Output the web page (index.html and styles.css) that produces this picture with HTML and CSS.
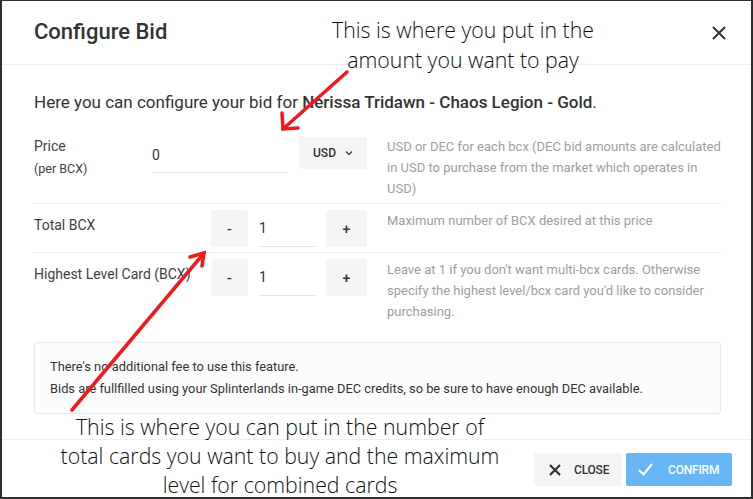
FILE: index.html
```html
<!DOCTYPE html>
<html>
<head>
<meta charset="utf-8">
<link rel="stylesheet" href="styles.css">
</head>
<body>
<div class="modal">
  <header class="modal-header">
    <h1 class="title">Configure Bid</h1>
    <button class="icon-close" aria-label="close">
      <svg width="16" height="16" viewBox="0 0 16 16"><path d="M2 2 L14 14 M14 2 L2 14" stroke="#333" stroke-width="2" fill="none"/></svg>
    </button>
  </header>
  <main class="modal-body">
    <p class="intro">Here you can configure your bid for <b>Nerissa Tridawn - Chaos Legion - Gold</b>.</p>
    <div class="row row-first">
      <div class="label label-price">Price<br><span class="sub">(per BCX)</span></div>
      <div class="controls">
        <div class="input wide">0</div>
        <div class="btn btn-usd">USD <svg width="8" height="6" viewBox="0 0 8 6"><path d="M1 1.5 L4 4.5 L7 1.5" stroke="#444" stroke-width="1.3" fill="none"/></svg></div>
      </div>
      <div class="desc">USD or DEC for each bcx (DEC bid amounts are calculated in USD to purchase from the market which operates in USD)</div>
    </div>
    <div class="row">
      <div class="label">Total BCX</div>
      <div class="controls">
        <div class="btn btn-step">-</div>
        <div class="input narrow">1</div>
        <div class="btn btn-step plus">+</div>
      </div>
      <div class="desc">Maximum number of BCX desired at this price</div>
    </div>
    <div class="row row-last">
      <div class="label">Highest Level Card (BCX)</div>
      <div class="controls">
        <div class="btn btn-step">-</div>
        <div class="input narrow">1</div>
        <div class="btn btn-step plus">+</div>
      </div>
      <div class="desc">Leave at 1 if you don't want multi-bcx cards. Otherwise specify the highest level/bcx card you'd like to consider purchasing.</div>
    </div>
    <div class="info">
      <p>There's no additional fee to use this feature.</p>
      <p>Bids are fullfilled using your Splinterlands in-game DEC credits, so be sure to have enough DEC available.</p>
    </div>
  </main>
  <footer class="modal-footer">
    <button class="fbtn fbtn-close">
      <svg width="12" height="12" viewBox="0 0 12 12"><path d="M1 1 L11 11 M11 1 L1 11" stroke="#333" stroke-width="2.2" fill="none"/></svg>
      <span>CLOSE</span>
    </button>
    <button class="fbtn fbtn-confirm">
      <svg width="15" height="13" viewBox="0 0 15 13"><path d="M1 7 L5.5 11.5 L14 1" stroke="#fff" stroke-width="2" fill="none"/></svg>
      <span>CONFIRM</span>
    </button>
  </footer>

  <div class="note note-top">This is where you put in the<br>amount you want to pay</div>
  <div class="note note-bottom">This is where you can put in the number of<br>total cards you want to buy and the maximum<br>level for combined cards</div>
  <svg class="arrows" width="753" height="499" viewBox="0 0 753 499">
    <g stroke="#f0191b" stroke-width="3.5" stroke-linecap="round" fill="none">
      <path d="M347 72 L283 129"/>
      <path d="M282 113 L283 129 L298 128"/>
      <path d="M72 410 L204 253"/>
      <path d="M190 257 L204 253 L202 266"/>
    </g>
  </svg>
</div>
</body>
</html>
```

FILE: styles.css
```css
* { box-sizing: border-box; }
html, body { margin: 0; padding: 0; }
body {
  background: #2e2e2e;
  width: 753px;
  height: 499px;
  overflow: hidden;
  font-family: Roboto, "Liberation Sans", sans-serif;
  color: #424242;
}
.modal {
  position: relative;
  margin: 1px 2px 0 2px;
  width: 749px;
  height: 496px;
  background: #fff;
  display: flex;
  flex-direction: column;
}
.modal-header {
  height: 64px;
  padding: 18px 24px 0 32px;
  border-bottom: 1px solid #eeeeee;
  display: flex;
  justify-content: space-between;
  align-items: flex-start;
}
.title {
  margin: 0;
  font-size: 22px;
  line-height: 26px;
  font-weight: 500;
  color: #333;
}
.icon-close {
  border: 0;
  background: none;
  padding: 0;
  margin-top: 6px;
  width: 16px;
  height: 16px;
}
.modal-body {
  flex: 1;
  padding: 25px 30px 0 32px;
}
.intro {
  margin: 0 0 15px;
  font-size: 17px;
  line-height: 24px;
  color: #333;
}
.intro b { font-weight: 500; }
.row {
  display: flex;
  padding: 6px 0 5px;
  border-bottom: 1px solid #eeeeee;
}
.row-first { padding: 7px 0 4px; }
.row-last { border-bottom: 0; }
.label {
  width: 118px;
  flex: none;
  font-size: 14px;
  line-height: 21px;
  padding-top: 5px;
  color: #424242;
  white-space: nowrap;
}
.label-price { padding-top: 0; line-height: 21px; }
.label-price .sub { font-size: 12.5px; line-height: 23px; }
.controls {
  width: 215px;
  flex: none;
  display: flex;
  justify-content: flex-end;
  align-items: flex-start;
}
.input {
  height: 37px;
  border-bottom: 1px solid #e4e4e4;
  font-size: 14px;
  line-height: 36px;
  color: #333;
}
.input.wide { width: 136px; margin-right: 11px; height: 36px; margin-top: 1px; }
.input.narrow { width: 57px; margin: 0 10px 0 11px; }
.btn {
  background: #f5f5f5;
  border-radius: 2px;
  display: flex;
  align-items: center;
  justify-content: center;
  font-weight: 500;
  color: #333;
}
.btn-usd {
  width: 68px;
  height: 32px;
  margin-top: 1px;
  font-size: 12px;
  gap: 9px;
}
.btn-step {
  width: 37px;
  height: 37px;
  font-size: 14px;
}
.btn-step.plus { width: 41px; }
.desc {
  margin-left: 20px;
  font-size: 13px;
  line-height: 21px;
  color: #9e9e9e;
}
.info {
  margin-top: 15px;
  border: 1px solid #e8e8e8;
  border-radius: 3px;
  background: #fcfcfc;
  padding: 13px 15px 13px;
  font-size: 12.85px;
  line-height: 22px;
  color: #333;
}
.info p { margin: 0; }
.modal-footer {
  height: 58px;
  border-top: 1px solid #eeeeee;
  padding: 13px 19px 0 0;
  display: flex;
  justify-content: flex-end;
  align-items: flex-start;
  gap: 4px;
}
.fbtn {
  border: 0;
  height: 33px;
  border-radius: 2px;
  display: flex;
  align-items: center;
  font-family: Roboto, "Liberation Sans", sans-serif;
  font-size: 12px;
  font-weight: 500;
  letter-spacing: -0.2px;
  padding: 0;
}
.fbtn-close {
  width: 88px;
  background: #f5f5f5;
  color: #333;
  padding-left: 15px;
  gap: 13px;
}
.fbtn-confirm {
  width: 106px;
  background: #67b6f5;
  color: #fff;
  padding-left: 12px;
  gap: 15px;
}
.note {
  position: absolute;
  text-align: center;
  font-family: "Open Sans", sans-serif;
  font-weight: 300;
  font-size: 21.3px;
  line-height: 30px;
  color: #111;
  white-space: nowrap;
}
.note-top { left: 261px; width: 400px; top: 14px; }
.note-bottom { left: 28px; width: 500px; top: 411px; line-height: 29px; }
.arrows {
  position: absolute;
  left: -2px;
  top: -1px;
  pointer-events: none;
}
```
